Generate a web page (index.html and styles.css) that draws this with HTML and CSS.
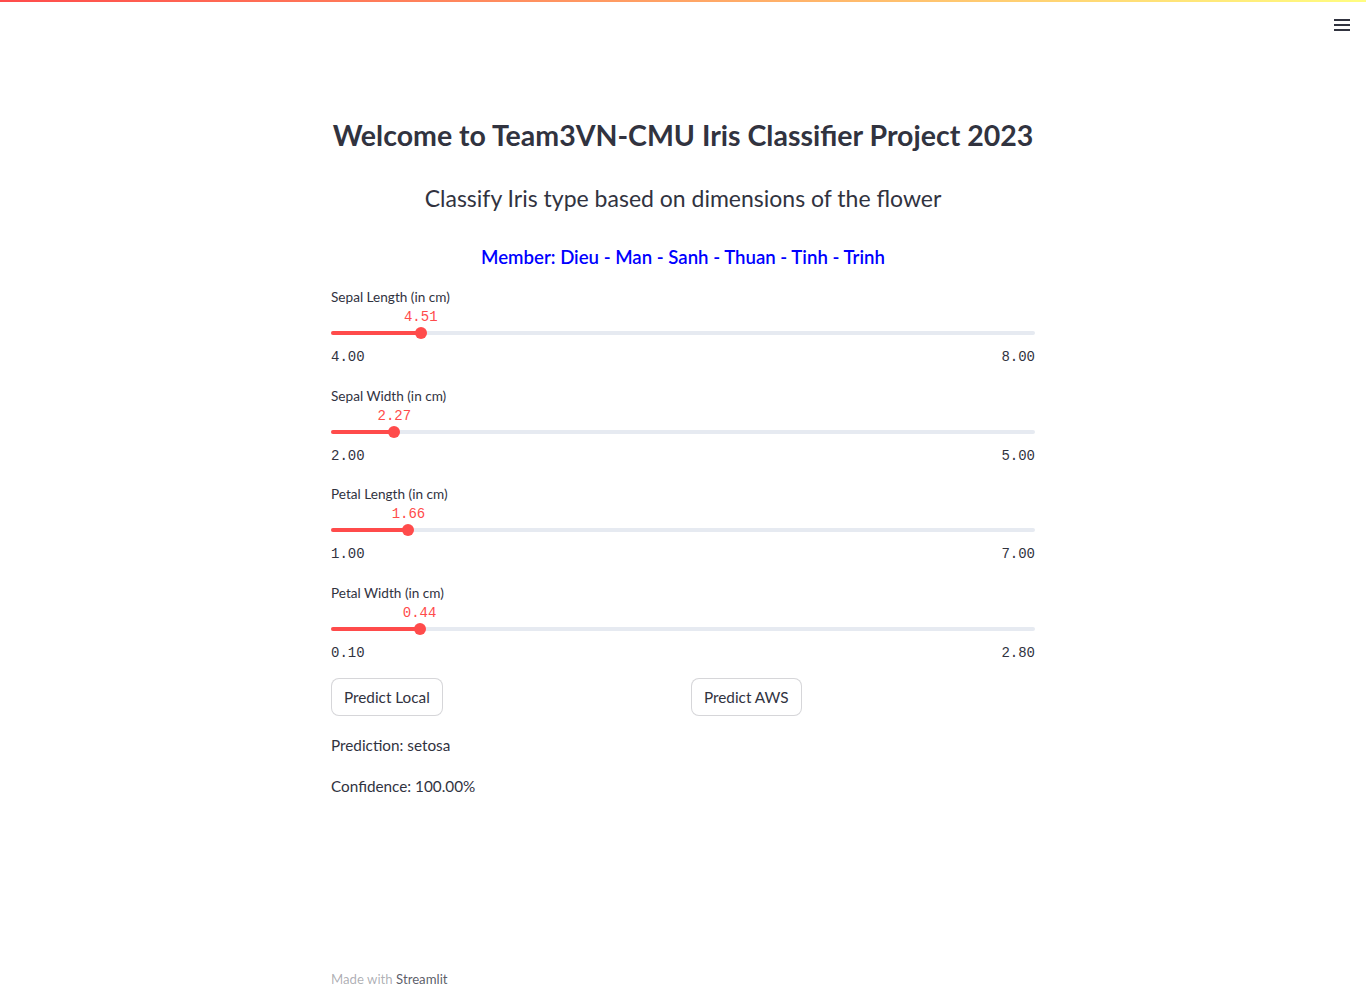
FILE: index.html
```html
<!DOCTYPE html>
<html>
<head>
<meta charset="utf-8">
<link rel="stylesheet" href="styles.css">
</head>
<body>
<div class="topbar"></div>
<header class="header">
  <button class="menu" aria-label="menu">
    <svg width="16" height="12" viewBox="0 0 16 12"><rect x="0" y="0" width="16" height="2" fill="#31333f"/><rect x="0" y="5" width="16" height="2" fill="#31333f"/><rect x="0" y="10" width="16" height="2" fill="#31333f"/></svg>
  </button>
</header>
<main class="main">
  <h1 class="title">Welcome to Team3VN-CMU Iris Classifier Project 2023</h1>
  <h2 class="subtitle">Classify Iris type based on dimensions of the flower</h2>
  <h3 class="members">Member: Dieu - Man - Sanh - Thuan - Tinh - Trinh</h3>

  <div class="slider">
    <div class="label">Sepal Length (in cm)</div>
    <div class="track-wrap">
      <div class="track"><div class="fill" style="width:12.75%"></div>
        <div class="thumb" style="left:12.75%"><span class="value">4.51</span></div>
      </div>
    </div>
    <div class="minmax"><span>4.00</span><span>8.00</span></div>
  </div>

  <div class="slider">
    <div class="label">Sepal Width (in cm)</div>
    <div class="track-wrap">
      <div class="track"><div class="fill" style="width:9%"></div>
        <div class="thumb" style="left:9%"><span class="value">2.27</span></div>
      </div>
    </div>
    <div class="minmax"><span>2.00</span><span>5.00</span></div>
  </div>

  <div class="slider">
    <div class="label">Petal Length (in cm)</div>
    <div class="track-wrap">
      <div class="track"><div class="fill" style="width:11%"></div>
        <div class="thumb" style="left:11%"><span class="value">1.66</span></div>
      </div>
    </div>
    <div class="minmax"><span>1.00</span><span>7.00</span></div>
  </div>

  <div class="slider">
    <div class="label">Petal Width (in cm)</div>
    <div class="track-wrap">
      <div class="track"><div class="fill" style="width:12.59%"></div>
        <div class="thumb" style="left:12.59%"><span class="value">0.44</span></div>
      </div>
    </div>
    <div class="minmax"><span>0.10</span><span>2.80</span></div>
  </div>

  <div class="buttons">
    <div class="col"><button class="btn">Predict Local</button></div>
    <div class="col"><button class="btn">Predict AWS</button></div>
  </div>

  <p class="result">Prediction: setosa</p>
  <p class="result">Confidence: 100.00%</p>
</main>
<footer class="footer">Made with <span class="brand">Streamlit</span></footer>
</body>
</html>
```
FILE: styles.css
```css
* { box-sizing: border-box; }
html, body { margin: 0; padding: 0; background: #fff; }
body {
  font-family: "Lato", "Noto Sans", sans-serif;
  color: #31333f;
  min-height: 998px;
  display: flex;
  flex-direction: column;
  position: relative;
}
.topbar {
  position: absolute;
  top: 0; left: 0; right: 0;
  height: 2px;
  background: linear-gradient(90deg, #ff4b4b, #fffd80);
}
.header {
  position: absolute;
  top: 0; right: 0;
  padding: 19px 16px 0 0;
}
.menu {
  border: 0; background: none; padding: 0; display: block; width: 16px; height: 12px;
}
.menu svg { display: block; }
.main {
  width: 704px;
  margin: 0 auto;
  padding-top: 117px;
  display: flex;
  flex-direction: column;
}
.title {
  margin: 0;
  font-size: 28.5px;
  line-height: 36px;
  font-weight: 700;
  text-align: center;
  white-space: nowrap;
}
.subtitle {
  margin: 30px 0 0;
  font-size: 23px;
  line-height: 30px;
  font-weight: 400;
  text-align: center;
}
.members {
  margin: 32px 0 0;
  font-size: 18.6px;
  line-height: 24px;
  font-weight: 600;
  color: #0000ff;
  text-align: center;
}
.slider {
  margin-top: 18px;
  display: flex;
  flex-direction: column;
}
.slider + .slider { margin-top: 20.5px; }
.label {
  font-size: 13.6px;
  line-height: 20px;
}
.track-wrap {
  height: 35px;
  padding-top: 24px;
}
.track {
  position: relative;
  height: 4px;
  border-radius: 4px;
  background: #e6eaf1;
}
.fill {
  height: 4px;
  border-radius: 4px;
  background: #ff4b4b;
}
.thumb {
  position: absolute;
  top: -4px;
  width: 12px;
  height: 12px;
  margin-left: -6px;
  border-radius: 50%;
  background: #ff4b4b;
}
.value {
  position: absolute;
  bottom: 14px;
  left: 50%;
  transform: translateX(-50%);
  font-family: "Liberation Mono", "DejaVu Sans Mono", monospace;
  font-size: 14px;
  line-height: 16px;
  color: #ff4b4b;
  white-space: nowrap;
}
.minmax {
  margin-top: 7px;
  display: flex;
  justify-content: space-between;
  font-family: "Liberation Mono", "DejaVu Sans Mono", monospace;
  font-size: 14px;
  line-height: 16px;
  color: #31333f;
}
.buttons {
  margin-top: 17.5px;
  display: flex;
  gap: 16px;
}
.col { flex: 1; }
.btn {
  font-family: inherit;
  font-size: 15.3px;
  color: #31333f;
  background: #fff;
  border: 1px solid rgba(49, 51, 63, 0.2);
  border-radius: 8px;
  height: 38px;
  padding: 0 12px;
}
.result {
  margin: 17px 0 0;
  font-size: 15.3px;
  line-height: 24px;
}
.footer {
  margin-top: auto;
  width: 704px;
  margin-left: auto;
  margin-right: auto;
  padding-bottom: 10px;
  font-size: 13.2px;
  line-height: 18px;
  color: rgba(49, 51, 63, 0.4);
}
.brand { color: rgba(49, 51, 63, 0.8); }
```
